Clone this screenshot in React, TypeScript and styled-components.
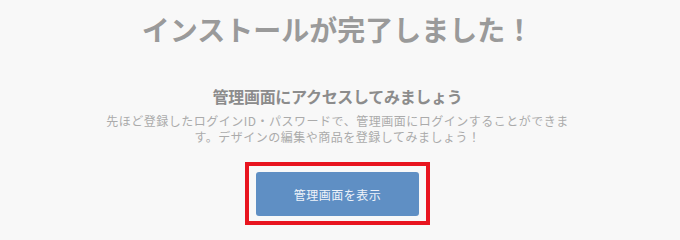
import * as React from 'react';
import { styled, createGlobalStyle } from 'styled-components';

const GlobalStyle = createGlobalStyle`
  html, body {
    margin: 0;
    padding: 0;
    background: #f8f8f8;
  }
  body {
    font-family: "Noto Sans CJK JP", "Noto Sans", sans-serif;
  }
`;

const Page = styled.main`
  width: 675px;
  height: 236px;
  display: flex;
  flex-direction: column;
  align-items: center;
  text-align: center;
`;

const Title = styled.h1`
  margin: 9px 0 0;
  font-size: 28px;
  line-height: 40px;
  font-weight: 700;
  color: #9a9a9a;
  letter-spacing: 0;
`;

const Heading = styled.h2`
  margin: 35px 0 0;
  font-size: 16px;
  line-height: 24px;
  font-weight: 700;
  color: #8c8c8c;
  letter-spacing: -0.3px;
`;

const Lead = styled.p`
  margin: 5px 0 0;
  max-width: 470px;
  font-size: 12px;
  line-height: 16px;
  color: #ababab;
  letter-spacing: 0.5px;
`;

const Highlight = styled.div`
  margin-top: 17px;
  border: 4px solid #e8151f;
  padding: 6px 7px 5px 7px;
`;

const Button = styled.button`
  display: flex;
  align-items: center;
  justify-content: center;
  width: 163px;
  height: 44px;
  border: none;
  border-radius: 3px;
  background: #5f8fc4;
  color: #eef3fa;
  font-family: inherit;
  font-size: 12px;
  letter-spacing: 0.5px;
  cursor: pointer;
`;

export default function App() {
  return (
    <>
      <GlobalStyle />
      <Page>
        <Title>インストールが完了しました！</Title>
        <Heading>管理画面にアクセスしてみましょう</Heading>
        <Lead>
          先ほど登録したログインID・パスワードで、管理画面にログインすることができます。デザインの編集や商品を登録してみましょう！
        </Lead>
        <Highlight>
          <Button type="button">管理画面を表示</Button>
        </Highlight>
      </Page>
    </>
  );
}
